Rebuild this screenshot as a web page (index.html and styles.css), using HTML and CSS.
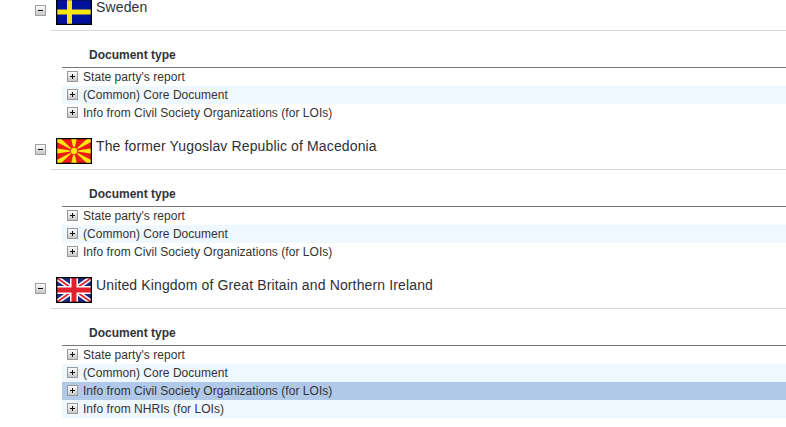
FILE: index.html
```html
<!DOCTYPE html>
<html lang="en">
<head>
<meta charset="utf-8">
<title>Documents by country</title>
<link rel="stylesheet" href="styles.css">
</head>
<body>
<svg class="defs" width="0" height="0" aria-hidden="true">
  <defs>
    <linearGradient id="btn" x1="0" y1="0" x2="0" y2="1">
      <stop offset="0" stop-color="#ffffff"/>
      <stop offset="1" stop-color="#c4c4c4"/>
    </linearGradient>
    <symbol id="minus" viewBox="0 0 11 11">
      <rect x=".5" y=".5" width="10" height="10" fill="url(#btn)" stroke="#a0a0a0"/>
      <path d="M3 5.500h5" stroke="#000" fill="none"/>
    </symbol>
    <symbol id="plus" viewBox="0 0 11 11">
      <rect x=".5" y=".5" width="10" height="10" fill="url(#btn)" stroke="#999"/>
      <path d="M3 5.500h5M5.500 3v5" stroke="#111" fill="none"/>
    </symbol>
  </defs>
</svg>
<main class="list">
  <section class="country">
    <svg class="toggle"><use href="#minus"/></svg>
    <div class="body">
      <header class="head">
        <svg class="flag" viewBox="0 0 36 26">
          <rect width="36" height="26" fill="#000"/>
          <rect x="1.300" y="1.300" width="33.400" height="23.400" fill="#00129a"/>
          <path d="M1.300 10.500h33.400v5H1.300zM11 1.300h5v23.400h-5z" fill="#f7e60f"/>
        </svg>
        <h2 class="title">Sweden</h2>
      </header>
      <div class="docs">
        <div class="docs-head">Document type</div>
        <div class="row"><svg class="expand"><use href="#plus"/></svg>State party's report</div>
        <div class="row alt"><svg class="expand"><use href="#plus"/></svg>(Common) Core Document</div>
        <div class="row"><svg class="expand"><use href="#plus"/></svg>Info from Civil Society Organizations (for LOIs)</div>
      </div>
    </div>
  </section>
  <section class="country">
    <svg class="toggle"><use href="#minus"/></svg>
    <div class="body">
      <header class="head">
        <svg class="flag" viewBox="0 0 36 26">
          <rect width="36" height="26" fill="#000"/>
          <rect x="1.300" y="1.300" width="33.400" height="23.400" fill="#ee1c13"/>
          <path d="M18 13L1.300 4.200V1.300h4.200zM18 13L34.700 4.200V1.300h-4.200zM18 13L1.300 21.800v2.900h4.200zM18 13l16.700 8.800v2.900h-4.200zM18 13L15.300 1.300h5.400zM18 13L15.300 24.700h5.400zM18 13L1.300 10.400v5.200zM18 13l16.700-2.600v5.200z" fill="#fde812"/>
          <circle cx="18" cy="13" r="3.800" fill="#fde812" stroke="#ee1c13"/>
        </svg>
        <h2 class="title">The former Yugoslav Republic of Macedonia</h2>
      </header>
      <div class="docs">
        <div class="docs-head">Document type</div>
        <div class="row"><svg class="expand"><use href="#plus"/></svg>State party's report</div>
        <div class="row alt"><svg class="expand"><use href="#plus"/></svg>(Common) Core Document</div>
        <div class="row"><svg class="expand"><use href="#plus"/></svg>Info from Civil Society Organizations (for LOIs)</div>
      </div>
    </div>
  </section>
  <section class="country">
    <svg class="toggle"><use href="#minus"/></svg>
    <div class="body">
      <header class="head">
        <svg class="flag" viewBox="0 0 36 26">
          <rect width="36" height="26" fill="#000"/>
          <rect x="1" y="1" width="34" height="24" fill="#1a2a80"/>
          <path d="M1 1l34 24M35 1L1 25" stroke="#fff" stroke-width="5"/>
          <path d="M1 1l34 24M35 1L1 25" stroke="#e0202f" stroke-width="1.600"/>
          <path d="M1 13h34M18 1v24" stroke="#fff" stroke-width="8"/>
          <path d="M1 13h34M18 1v24" stroke="#e0202f" stroke-width="5"/>
          <rect x=".65" y=".65" width="34.700" height="24.700" fill="none" stroke="#000" stroke-width="1.300"/>
        </svg>
        <h2 class="title">United Kingdom of Great Britain and Northern Ireland</h2>
      </header>
      <div class="docs">
        <div class="docs-head">Document type</div>
        <div class="row"><svg class="expand"><use href="#plus"/></svg>State party's report</div>
        <div class="row alt"><svg class="expand"><use href="#plus"/></svg>(Common) Core Document</div>
        <div class="row selected"><svg class="expand"><use href="#plus"/></svg>Info from Civil Society Organizations (for LOIs)</div>
        <div class="row alt"><svg class="expand"><use href="#plus"/></svg>Info from NHRIs (for LOIs)</div>
      </div>
    </div>
  </section>
</main>
</body>
</html>
```
FILE: styles.css
```css
html, body {
  margin: 0;
  padding: 0;
  background: #fff;
  overflow: hidden;
}
body {
  font-family: "Liberation Sans", Arial, sans-serif;
  color: #333;
}
.defs {
  display: block;
  height: 0;
}
.list {
  margin-top: -1px;
}
.country {
  display: flex;
  align-items: flex-start;
  padding-left: 35px;
  margin-bottom: 16px;
}
.toggle {
  flex: none;
  width: 11px;
  height: 11px;
  margin: 6px 5px 0 0;
}
.body {
  flex: 1;
  min-width: 0;
}
.head {
  display: flex;
  align-items: flex-start;
  gap: 4px;
  height: 31px;
  padding-left: 5px;
  border-bottom: 1px solid #d9d9d9;
}
.flag {
  flex: none;
  width: 36px;
  height: 26px;
}
.title {
  margin: 0;
  font-size: 14px;
  font-weight: normal;
  line-height: 16px;
  letter-spacing: 0.135px;
  color: #2f2f38;
}
.docs {
  margin-left: 11px;
}
.docs-head {
  height: 36px;
  padding-left: 27px;
  font-size: 12px;
  font-weight: bold;
  line-height: 48px;
  border-bottom: 1px solid #777;
}
.row {
  display: flex;
  align-items: center;
  gap: 5px;
  height: 18px;
  padding-left: 5px;
  font-size: 12px;
  line-height: 18px;
  letter-spacing: 0.04px;
}
.alt {
  background: #eff7ff;
}
.selected {
  background: #b0c9e9;
}
.expand {
  flex: none;
  width: 11px;
  height: 11px;
  margin-top: -1px;
}
```
